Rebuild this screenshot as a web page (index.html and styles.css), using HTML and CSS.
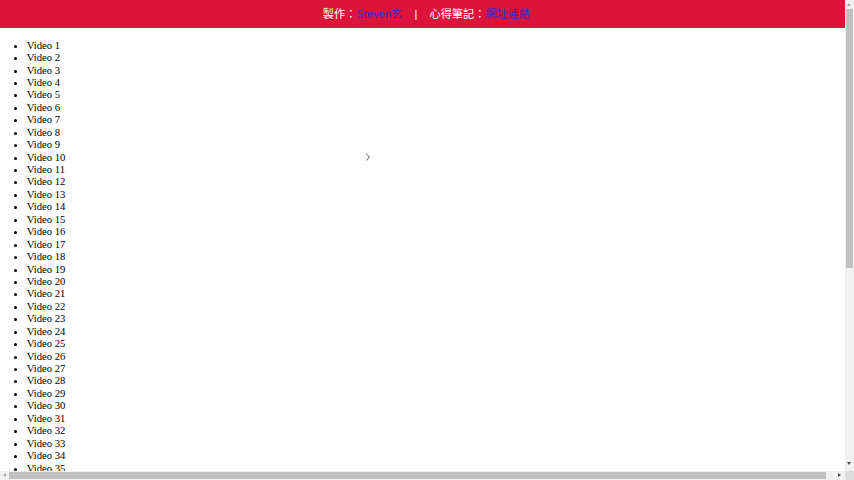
FILE: index.html
```html
<!DOCTYPE html>
<html lang="zh-Hant">
<head>
<meta charset="utf-8">
<title>Video List</title>
<link rel="stylesheet" href="styles.css">
</head>
<body>
<div class="page">
  <header class="topbar">
    <span>製作：</span><a class="link" href="#">Steven玄</a><span class="sep">|</span><span>心得筆記：</span><a class="link" href="#">網址連結</a>
  </header>
  <ul class="videos" id="videos">
    <li>Video 1</li><li>Video 2</li><li>Video 3</li><li>Video 4</li><li>Video 5</li>
    <li>Video 6</li><li>Video 7</li><li>Video 8</li><li>Video 9</li><li>Video 10</li>
    <li>Video 11</li><li>Video 12</li><li>Video 13</li><li>Video 14</li><li>Video 15</li>
    <li>Video 16</li><li>Video 17</li><li>Video 18</li><li>Video 19</li><li>Video 20</li>
    <li>Video 21</li><li>Video 22</li><li>Video 23</li><li>Video 24</li><li>Video 25</li>
    <li>Video 26</li><li>Video 27</li><li>Video 28</li><li>Video 29</li><li>Video 30</li>
    <li>Video 31</li><li>Video 32</li><li>Video 33</li><li>Video 34</li><li>Video 35</li>
  </ul>
  <svg class="chevron" width="6" height="10" viewBox="0 0 6 10"><path d="M1 1.5 L4.5 5 L1.5 8.5" fill="none" stroke="#555" stroke-width="1"/></svg>
</div>
<div class="vscroll">
  <span class="arrow-up"></span>
  <div class="vthumb"></div>
  <span class="arrow-down"></span>
</div>
<div class="hscroll">
  <span class="arrow-left"></span>
  <div class="hthumb"></div>
  <span class="arrow-right"></span>
</div>
<div class="corner"></div>
</body>
</html>
```
FILE: styles.css
```css
html, body {
  margin: 0;
  padding: 0;
  overflow: hidden;
  background: #fff;
}
.page {
  position: relative;
  width: 845px;
  height: 471px;
  overflow: hidden;
}
.topbar {
  height: 28px;
  line-height: 28px;
  background: #dc143c;
  color: #fff;
  text-align: center;
  font-family: "Liberation Sans", "Noto Sans CJK TC", sans-serif;
  font-size: 11.2px;
  padding-left: 8px;
  white-space: nowrap;
}
.link {
  color: #4a22b4;
  text-decoration: none;
}
.sep {
  display: inline-block;
  width: 27px;
  text-align: center;
}
.videos {
  margin: 10.67px 0;
  padding-left: 26.67px;
  font-family: "Liberation Serif", "Times New Roman", serif;
  font-size: 10.67px;
  line-height: 12.44px;
  color: #000;
}
.chevron {
  position: absolute;
  left: 365px;
  top: 152px;
}
.vscroll {
  position: fixed;
  left: 845px;
  top: 0;
  width: 9px;
  height: 471px;
  background: #f1f1f1;
}
.vthumb {
  position: absolute;
  left: 1px;
  top: 9px;
  width: 7px;
  height: 259px;
  background: #c1c1c1;
}
.arrow-up, .arrow-down, .arrow-left, .arrow-right {
  position: absolute;
  width: 0;
  height: 0;
}
.arrow-up {
  left: 2px;
  top: 3px;
  border-left: 2.5px solid transparent;
  border-right: 2.5px solid transparent;
  border-bottom: 3px solid #a3a3a3;
}
.arrow-down {
  left: 2px;
  top: 462px;
  border-left: 2.5px solid transparent;
  border-right: 2.5px solid transparent;
  border-top: 3px solid #505050;
}
.hscroll {
  position: fixed;
  left: 0;
  top: 471px;
  width: 845px;
  height: 9px;
  background: #f1f1f1;
}
.hthumb {
  position: absolute;
  left: 9px;
  top: 1px;
  width: 817px;
  height: 7px;
  background: #c1c1c1;
}
.arrow-left {
  left: 3px;
  top: 2px;
  border-top: 2.5px solid transparent;
  border-bottom: 2.5px solid transparent;
  border-right: 3px solid #a3a3a3;
}
.arrow-right {
  left: 838px;
  top: 2px;
  border-top: 2.5px solid transparent;
  border-bottom: 2.5px solid transparent;
  border-left: 3px solid #505050;
}
.corner {
  position: fixed;
  left: 845px;
  top: 471px;
  width: 9px;
  height: 9px;
  background: #dcdcdc;
}
```
